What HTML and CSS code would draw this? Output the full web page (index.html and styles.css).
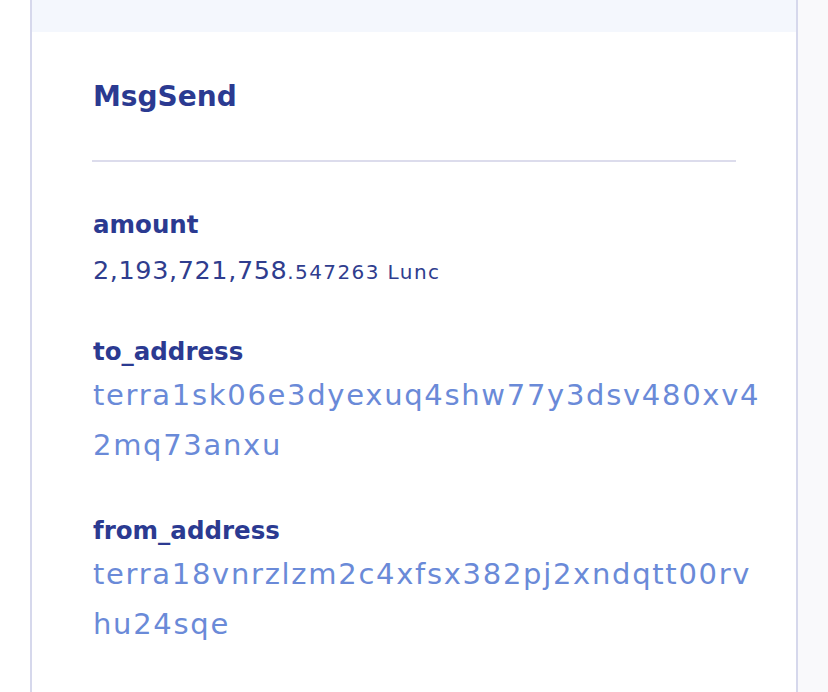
FILE: index.html
```html
<!DOCTYPE html>
<html lang="en">
<head>
<meta charset="utf-8">
<title>MsgSend</title>
<link rel="stylesheet" href="styles.css">
</head>
<body>
<div class="page">
  <div class="gutter-left"></div>
  <div class="card">
    <div class="card-top"></div>
    <div class="card-body">
      <h2 class="title">MsgSend</h2>
      <hr class="divider">
      <div class="field">
        <div class="label">amount</div>
        <div class="value amount"><span class="int">2,193,721,758</span><span class="dec">.547263 Lunc</span></div>
      </div>
      <div class="field">
        <div class="label">to_address</div>
        <div class="value address"><span class="line">terra1sk06e3dyexuq4shw77y3dsv480xv4</span><span class="line">2mq73anxu</span></div>
      </div>
      <div class="field">
        <div class="label">from_address</div>
        <div class="value address"><span class="line">terra18vnrzlzm2c4xfsx382pj2xndqtt00rv</span><span class="line">hu24sqe</span></div>
      </div>
    </div>
  </div>
  <div class="gutter-right"></div>
</div>
</body>
</html>
```

FILE: styles.css
```css
html, body {
  margin: 0;
  padding: 0;
  background: #ffffff;
}
body {
  font-family: "DejaVu Sans", "Liberation Sans", sans-serif;
  color: #2b3a91;
}
.page {
  display: flex;
  min-height: 692px;
}
.gutter-left {
  width: 30px;
  flex: none;
  background: #ffffff;
}
.card {
  width: 764px;
  flex: none;
  border-left: 2px solid #d6d8ec;
  border-right: 2px solid #d6d8ec;
  background: #ffffff;
}
.gutter-right {
  flex: 1;
  background: #f9f9fb;
}
.card-top {
  height: 32px;
  background: #f4f7fd;
}
.card-body {
  padding: 48px 60px 0 61px;
}
.title {
  margin: 0;
  font-size: 28px;
  line-height: 34px;
  font-weight: bold;
  color: #2b3a91;
}
.divider {
  margin: 46px 0 0 -1px;
  border: 0;
  height: 2px;
  background: #dcdcec;
}
.field {
  margin-top: 48px;
}
.field + .field {
  margin-top: 46px;
}
.label {
  font-size: 24.5px;
  line-height: 30px;
  font-weight: bold;
  color: #2b3a91;
}
.value.amount {
  margin-top: 15px;
  padding-bottom: 6px;
  font-size: 25.5px;
  line-height: 30px;
  letter-spacing: 0.6px;
  color: #2f3d8e;
}
.amount .dec {
  font-size: 20px;
  line-height: 1;
  letter-spacing: 1.4px;
}
.value.address {
  margin-top: 3px;
  font-size: 29px;
  line-height: 50px;
  letter-spacing: 1.7px;
  color: #6a8ad8;
}
.address .line {
  display: block;
}
```
